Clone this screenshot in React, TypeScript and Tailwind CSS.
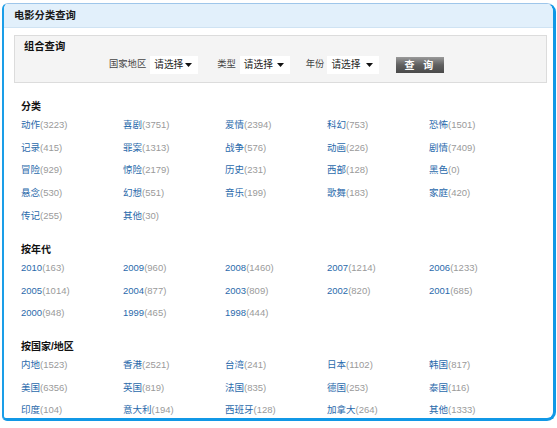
import React from 'react'

type Item = { name: string; count: number }

const genres: Item[] = [
  { name: '动作', count: 3223 }, { name: '喜剧', count: 3751 }, { name: '爱情', count: 2394 }, { name: '科幻', count: 753 }, { name: '恐怖', count: 1501 },
  { name: '记录', count: 415 }, { name: '罪案', count: 1313 }, { name: '战争', count: 576 }, { name: '动画', count: 226 }, { name: '剧情', count: 7409 },
  { name: '冒险', count: 929 }, { name: '惊险', count: 2179 }, { name: '历史', count: 231 }, { name: '西部', count: 128 }, { name: '黑色', count: 0 },
  { name: '悬念', count: 530 }, { name: '幻想', count: 551 }, { name: '音乐', count: 199 }, { name: '歌舞', count: 183 }, { name: '家庭', count: 420 },
  { name: '传记', count: 255 }, { name: '其他', count: 30 },
]

const years: Item[] = [
  { name: '2010', count: 163 }, { name: '2009', count: 960 }, { name: '2008', count: 1460 }, { name: '2007', count: 1214 }, { name: '2006', count: 1233 },
  { name: '2005', count: 1014 }, { name: '2004', count: 877 }, { name: '2003', count: 809 }, { name: '2002', count: 820 }, { name: '2001', count: 685 },
  { name: '2000', count: 948 }, { name: '1999', count: 465 }, { name: '1998', count: 444 },
]

const regions: Item[] = [
  { name: '内地', count: 1523 }, { name: '香港', count: 2521 }, { name: '台湾', count: 241 }, { name: '日本', count: 1102 }, { name: '韩国', count: 817 },
  { name: '美国', count: 6356 }, { name: '英国', count: 819 }, { name: '法国', count: 835 }, { name: '德国', count: 253 }, { name: '泰国', count: 116 },
  { name: '印度', count: 104 }, { name: '意大利', count: 194 }, { name: '西班牙', count: 128 }, { name: '加拿大', count: 264 }, { name: '其他', count: 1333 },
]

const font = { fontFamily: 'Arial, "Liberation Sans", "Noto Sans CJK SC", sans-serif' }

const Select = ({ width }: { width: string }) => (
  <div className={`flex h-[18px] items-center justify-between whitespace-nowrap bg-white pl-[4px] pr-[6px] text-[9.7px] text-[#222] ${width}`}>
    <span>请选择</span>
    <svg width="7" height="4" viewBox="0 0 7 4"><path d="M0 0h7L3.5 4z" fill="#111" /></svg>
  </div>
)

const Section = ({ title, items, className }: { title: string; items: Item[]; className: string }) => (
  <div className={className}>
    <div className="h-[14px] text-[10px] font-bold leading-[14px] text-[#111]">{title}</div>
    <div className="grid grid-cols-[102px_102px_102px_102px_102px]">
      {items.map((it) => (
        <a key={it.name + it.count} className="flex h-[22.6px] items-center text-[9.5px] whitespace-nowrap">
          <span className="text-[#2a6aab]">{it.name}</span>
          <span className="text-[#9a9a9a]">({it.count})</span>
        </a>
      ))}
    </div>
  </div>
)

export default function App() {
  return (
    <div className="h-[428px] w-[557px] bg-white pl-[2px] pt-[3px]" style={font}>
      <div className="h-[418px] w-[554px] overflow-hidden rounded-tl-[6px] rounded-tr-[9px] rounded-br-[9px] rounded-bl-[5px] border-t border-l-2 border-r-[3px] border-b-[3px] border-t-[#9ec6ea] border-l-[#1a9ee8] border-r-[#1198e6] border-b-[#1198e6]">
        <div className="flex h-[24px] items-center border-b border-[#cfe3f3] bg-[#e2f0fb] pl-[10px] text-[10.3px] font-bold text-[#1a1a1a]">
          电影分类查询
        </div>
        <div className="ml-[10px] mr-[6px] mt-[7px] h-[48px] border border-[#dcdcdc] bg-[#f4f4f4] pl-[9px] pt-[3px]">
          <div className="text-[10.3px] font-bold leading-[16px] text-[#111]">组合查询</div>
          <div className="mt-[1px] flex items-center whitespace-nowrap pl-[85px] text-[9.3px] text-[#444]">
            <span>国家地区</span>
            <span className="ml-[4px]"><Select width="w-[48px]" /></span>
            <span className="ml-[19px]">类型</span>
            <span className="ml-[4px]"><Select width="w-[50px]" /></span>
            <span className="ml-[16px]">年份</span>
            <span className="ml-[3px]"><Select width="w-[52px]" /></span>
            <button className="ml-[17px] flex h-[16px] w-[48px] items-center justify-center bg-gradient-to-b from-[#9a9a9a] via-[#606060] to-[#4a4a4a] text-[10px] font-bold tracking-[3px] text-white">
              查 询
            </button>
          </div>
        </div>
        <div className="pl-[17px]">
          <Section title="分类" items={genres} className="mt-[17px]" />
          <Section title="按年代" items={years} className="mt-[16px]" />
          <Section title="按国家/地区" items={regions} className="mt-[15px]" />
        </div>
      </div>
    </div>
  )
}
